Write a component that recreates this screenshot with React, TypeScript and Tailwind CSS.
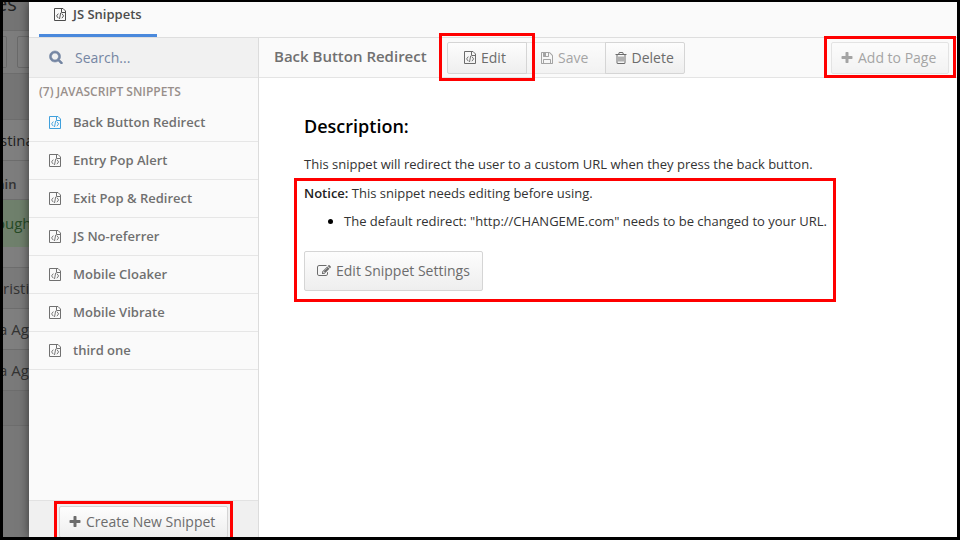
import React from "react";

const paths = {
  plus: "M1600 736v192q0 40-28 68t-68 28h-416v416q0 40-28 68t-68 28h-192q-40 0-68-28t-28-68v-416h-416q-40 0-68-28t-28-68v-192q0-40 28-68t68-28h416v-416q0-40 28-68t68-28h192q40 0 68 28t28 68v416h416q40 0 68 28t28 68z",
  search:
    "M1216 832q0-185-131.5-316.5t-316.5-131.5-316.5 131.5-131.5 316.5 131.5 316.5 316.5 131.5 316.5-131.5 131.5-316.5zm512 832q0 52-38 90t-90 38q-54 0-90-38l-343-342q-179 124-399 124-143 0-273.5-55.5t-225-150-150-225-55.5-273.5 55.5-273.5 150-225 225-150 273.5-55.5 273.5 55.5 225 150 150 225 55.5 273.5q0 220-124 399l343 343q37 37 37 90z",
  save: "M512 1536h768v-384h-768v384zm896 0h128v-896q0-14-10-38.5t-20-34.5l-281-281q-10-10-34-20t-39-10v416q0 40-28 68t-68 28h-576q-40 0-68-28t-28-68v-416h-128v1280h128v-416q0-40 28-68t68-28h832q40 0 68 28t28 68v416zm-384-928v-320q0-13-9.5-22.5t-22.5-9.5h-192q-13 0-22.5 9.5t-9.5 22.5v320q0 13 9.5 22.5t22.5 9.5h192q13 0 22.5-9.5t9.5-22.5zm640 32v928q0 40-28 68t-68 28h-1344q-40 0-68-28t-28-68v-1344q0-40 28-68t68-28h928q40 0 88 20t76 48l280 280q28 28 48 76t20 88z",
  trash:
    "M704 736v576q0 14-9 23t-23 9h-64q-14 0-23-9t-9-23v-576q0-14 9-23t23-9h64q14 0 23 9t9 23zm256 0v576q0 14-9 23t-23 9h-64q-14 0-23-9t-9-23v-576q0-14 9-23t23-9h64q14 0 23 9t9 23zm256 0v576q0 14-9 23t-23 9h-64q-14 0-23-9t-9-23v-576q0-14 9-23t23-9h64q14 0 23 9t9 23zm128 724v-948h-896v948q0 22 7 40.5t14.5 27 10.5 8.5h832q3 0 10.5-8.5t14.5-27 7-40.5zm-672-1076h448l-48-117q-7-9-17-11h-317q-10 2-17 11zm928 32v64q0 14-9 23t-23 9h-96v948q0 83-47 143.5t-113 60.5h-832q-66 0-113-58.5t-47-141.5v-952h-96q-14 0-23-9t-9-23v-64q0-14 9-23t23-9h309l70-167q15-37 54-63t79-26h320q40 0 79 26t54 63l70 167h309q14 0 23 9t9 23z",
  edit: "M888 1184l116-116-152-152-116 116v56h96v96h56zm440-720q-16-16-33 1l-350 350q-17 17-1 33t33-1l350-350q17-17 1-33zm80 594v190q0 119-84.5 203.5t-203.5 84.5h-832q-119 0-203.5-84.5t-84.5-203.5v-832q0-119 84.5-203.5t203.5-84.5h832q63 0 117 25 15 7 18 23 3 17-9 29l-49 49q-14 14-32 8-23-6-45-6h-832q-66 0-113 47t-47 113v832q0 66 47 113t113 47h832q66 0 113-47t47-113v-126q0-13 9-22l64-64q15-15 35-7t20 29zm-96-738l288 288-672 672h-288v-288zm444 132l-92 92-288-288 92-92q28-28 68-28t68 28l152 152q28 28 28 68t-28 68z",
};

function Icon({ name, className = "" }: { name: keyof typeof paths; className?: string }) {
  return (
    <svg viewBox="0 0 1792 1792" fill="currentColor" className={`size-3.5 shrink-0 ${className}`}>
      <path d={paths[name]} />
    </svg>
  );
}

// File outline with a folded corner and a </> mark, aligned to whole pixels.
function CodeFile({ className = "" }: { className?: string }) {
  return (
    <svg viewBox="0 0 12 13" fill="none" stroke="currentColor" className={`h-[13px] w-3 shrink-0 ${className}`}>
      <path d="M.5.5H9L11.5 3V12.5H.5Z" />
      <path d="M7.5.5V4.5H11.5" />
      <path d="M4.3 5.6L2.6 7.9L4.3 10.2M7.9 5.6L9.6 7.9L7.9 10.2M6.7 4.8L5.5 11" strokeWidth=".95" />
    </svg>
  );
}

const snippets = [
  "Back Button Redirect",
  "Entry Pop Alert",
  "Exit Pop & Redirect",
  "JS No-referrer",
  "Mobile Cloaker",
  "Mobile Vibrate",
  "third one",
];

const button =
  "flex items-center whitespace-nowrap border border-[#d5d5d5] bg-linear-to-b from-[#fdfdfd] to-[#eeeeee] text-[14px] text-[#6c6c6c]";

function PageBehind() {
  const row = "flex shrink-0 items-center border-b border-[#6d6d6d] whitespace-nowrap";
  return (
    <div className="flex h-full w-[26px] shrink-0 flex-col overflow-hidden bg-[#787878] text-[15px] text-[#333]">
      <div className={`${row} h-[29px] bg-[#747474]`}>
        <span className="-ml-[7px] -mt-[25px] text-[20px] text-[#222]">es</span>
      </div>
      <div className={`${row} h-[43px] gap-2.5 bg-[#7d7d7d]`}>
        <span className="h-[32px] w-1 shrink-0 rounded-r-xs border border-l-0 border-[#6a6a6a]" />
        <span className="h-[32px] w-8 shrink-0 rounded-xs border border-[#6a6a6a]" />
      </div>
      <div className={`${row} h-[46px] bg-[#757575]`} />
      <div className={`${row} h-[41px] bg-[#7f7f7f]`}>
        <span className="-ml-[3px] text-[#222]">stina</span>
      </div>
      <div className={`${row} h-[39px] bg-[#7d7d7d]`}>
        <span className="-ml-1.5 mt-2.5 text-[13px] font-semibold">ain</span>
      </div>
      <div className="flex h-[47px] shrink-0 items-center bg-[#6f806c] text-[#264a26]">
        <span className="-ml-[7px]">ough</span>
      </div>
      <div className={`${row} h-[21px] bg-[#7f7f7f]`} />
      <div className={`${row} h-[41px] bg-[#7a7a7a]`}>
        <span>risti</span>
      </div>
      <div className={`${row} h-[41px] bg-[#7f7f7f]`}>
        <span className="-ml-1">a Ag</span>
      </div>
      <div className={`${row} h-[41px] bg-[#7a7a7a]`}>
        <span className="-ml-1">a Ag</span>
      </div>
      <div className={`${row} h-[35px] bg-[#757575]`} />
    </div>
  );
}

function Sidebar() {
  return (
    <aside className="flex w-[230px] shrink-0 flex-col border-r border-[#dcdcdc] bg-[#fafafa]">
      <div className="flex h-10 shrink-0 items-center gap-3 border-b border-[#e4e4e4] bg-[#f1f1f1] pl-5 text-[14px] text-[#7586a3]">
        <Icon name="search" className="-mt-px stroke-current stroke-[80]" />
        <span>Search...</span>
      </div>
      <h2 className="flex h-[26px] shrink-0 items-center pl-2.5 pt-0.5 text-[12px] font-semibold text-[#988f8b]">
        (7) JAVASCRIPT SNIPPETS
      </h2>
      <ul>
        {snippets.map((s, i) => (
          <li
            key={s}
            className="flex h-[38px] items-center gap-3 border-b border-[#e6e6e6] pl-5 text-[13px] font-semibold text-[#707070]"
          >
            <CodeFile className={i === 0 ? "text-[#3fa0dd]" : ""} />
            <span>{s}</span>
          </li>
        ))}
      </ul>
      <div className="mt-auto flex h-[37px] shrink-0 overflow-hidden border-t border-[#e2e2e2] bg-[#f0f0f0] pl-[30px] pt-[5px]">
        <button className={`${button} h-8 w-[169px] gap-1 rounded-xs pb-0.5 pl-2`}>
          <Icon name="plus" className="mt-0.5" />
          <span>Create New Snippet</span>
        </button>
      </div>
    </aside>
  );
}

export default function App() {
  return (
    <div className="relative flex h-[540px] w-[960px] overflow-hidden border-t-2 border-r-3 border-b-3 border-l-3 border-black font-['Open_Sans','Noto_Sans',sans-serif]">
      <PageBehind />
      <div className="flex min-w-0 flex-1 flex-col bg-white shadow-[0_0_10px_rgba(0,0,0,0.55)]">
        <header className="flex h-9 shrink-0 border-b border-[#dedede] bg-[#fafafa] pl-2.5">
          <div className="flex h-[35px] w-[118px] items-center gap-[7px] border-b-3 border-[#4a89dc] pb-1.5 pl-[15px] text-[13px] font-semibold text-[#4c4c4c]">
            <CodeFile className="-mt-px" />
            <span>JS Snippets</span>
          </div>
        </header>
        <div className="flex min-h-0 flex-1">
          <Sidebar />
          <main className="min-w-0 flex-1">
            <div className="flex h-10 items-center border-b border-[#e4e4e4] bg-[#fafafa] pl-[15px] pr-2">
              <h1 className="w-[173px] whitespace-nowrap pb-0.5 text-[15px] font-semibold text-[#707070]">
                Back Button Redirect
              </h1>
              <button className={`${button} mt-px h-8 w-[80px] gap-[5px] rounded-l-xs pb-0.5 pl-4`}>
                <CodeFile />
                <span>Edit</span>
              </button>
              <button className={`${button} -ml-px mt-px h-8 w-20 gap-1 pb-0.5 pl-[13px] opacity-60`}>
                <Icon name="save" className="mt-px" />
                <span>Save</span>
              </button>
              <button className={`${button} -ml-px mt-px h-8 w-20 gap-[3.5px] rounded-r-xs pb-0.5 pl-2`}>
                <Icon name="trash" className="mt-px" />
                <span>Delete</span>
              </button>
              <button className={`${button} ml-auto mt-px h-8 w-[118px] gap-1 rounded-xs pb-0.5 pl-2 opacity-60`}>
                <Icon name="plus" className="mt-0.5" />
                <span>Add to Page</span>
              </button>
            </div>
            <article className="pl-[45px] pt-9 text-[13px] leading-5 text-[#333]">
              <h2 className="text-[18px] font-semibold leading-6 text-black">Description:</h2>
              <p className="mt-4">This snippet will redirect the user to a custom URL when they press the back button.</p>
              <p className="mt-[9px]">
                <b className="font-semibold text-[#222]">Notice:</b> This snippet needs editing before using.
              </p>
              <ul className="mt-2 list-disc pl-10 marker:text-black">
                <li className="whitespace-nowrap">
                  The default redirect: "http://CHANGEME.com" needs to be changed to your URL.
                </li>
              </ul>
              <button className={`${button} mt-5 h-10 w-[179px] gap-[5px] rounded-xs pl-3`}>
                <Icon name="edit" />
                <span>Edit Snippet Settings</span>
              </button>
            </article>
          </main>
        </div>
      </div>
      {/* Tutorial highlight frames */}
      <div className="absolute left-[436px] top-[31px] h-12 w-24 border-3 border-[#f00]" />
      <div className="absolute left-[821px] top-[34px] h-[42px] w-[132px] border-3 border-[#f00]" />
      <div className="absolute left-[291px] top-[176px] h-[124px] w-[542px] border-3 border-[#f00]" />
      <div className="absolute left-[51px] top-[499px] h-[36px] w-[179px] border-3 border-b-0 border-[#f00]" />
    </div>
  );
}
